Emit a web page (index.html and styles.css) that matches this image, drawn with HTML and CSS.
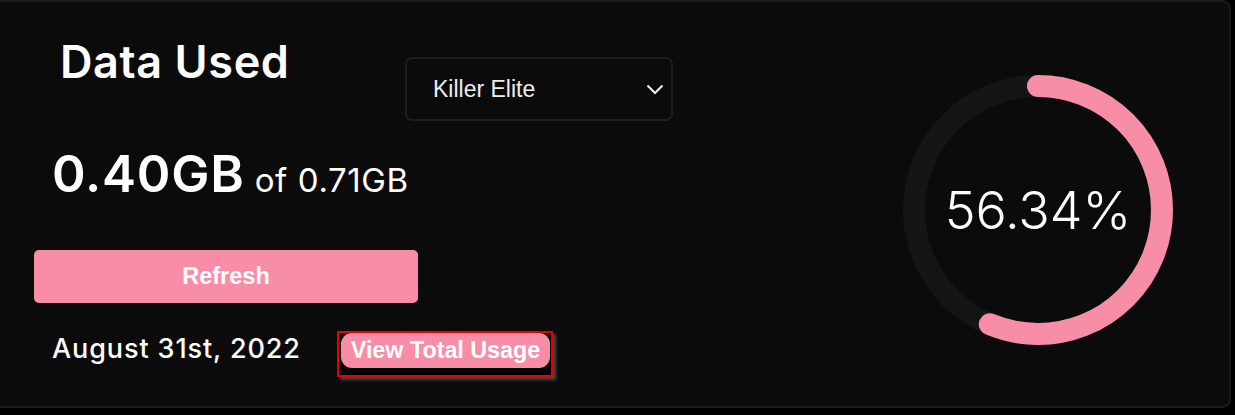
FILE: index.html
```html
<!DOCTYPE html>
<html lang="en">
<head>
<meta charset="utf-8">
<title>Data Used</title>
<link rel="stylesheet" href="styles.css">
</head>
<body>
<div class="card">
  <div class="left">
    <div class="title-row">
      <h1 class="title">Data Used</h1>
      <div class="select">
        <span class="select-label">Killer Elite</span>
        <svg class="chev" width="18" height="11" viewBox="0 0 18 11"><path d="M1.5 1.5 L9 9 L16.5 1.5" fill="none" stroke="#f2f2f2" stroke-width="2"/></svg>
      </div>
    </div>
    <div class="amount"><span class="used">0.40GB</span><span class="total">of 0.71GB</span></div>
    <button class="refresh">Refresh</button>
    <div class="date-row">
      <span class="date">August 31st, 2022</span>
      <button class="view"><span class="view-pill">View Total Usage</span></button>
    </div>
  </div>
  <div class="gauge">
    <svg class="ring" width="270" height="270" viewBox="0 0 270 270">
      <circle cx="135" cy="135" r="124" fill="none" stroke="#151515" stroke-width="22"/>
      <circle cx="135" cy="135" r="124" fill="none" stroke="#f78da7" stroke-width="22" stroke-linecap="round" stroke-dasharray="438.96 779.1" transform="rotate(-90 135 135)"/>
    </svg>
    <span class="pct">56.34%</span>
  </div>
</div>
</body>
</html>
```
FILE: styles.css
```css
html, body {
  margin: 0;
  padding: 0;
  background: #000;
}
body {
  width: 1235px;
  height: 415px;
  overflow: hidden;
}
.card {
  box-sizing: border-box;
  margin: 0 4px 0 -8px;
  height: 408px;
  background: #0b0b0b;
  border: 2px solid #1b1b1b;
  border-radius: 9px;
  display: flex;
  justify-content: space-between;
  align-items: flex-start;
}
.left {
  margin-left: 40px;
  display: flex;
  flex-direction: column;
}
.title-row {
  display: flex;
  align-items: flex-start;
}
.title {
  box-sizing: border-box;
  width: 371px;
  margin: 0;
  padding: 33px 0 0 26px;
  font-family: Inter, "Noto Sans", sans-serif;
  font-weight: 600;
  font-size: 45px;
  line-height: 54px;
  color: #fff;
  letter-spacing: 0.6px;
}
.select {
  box-sizing: border-box;
  margin-top: 55px;
  width: 268px;
  height: 64px;
  border: 2px solid #1e1e1e;
  border-radius: 7px;
  display: flex;
  align-items: center;
  justify-content: space-between;
  padding: 0 7px 0 26px;
}
.select-label {
  font-family: "Liberation Sans", Arial, sans-serif;
  font-size: 23px;
  color: #eeeeee;
}
.chev {
  margin-top: 0;
}
.amount {
  margin-top: 23px;
  padding-left: 18px;
  display: flex;
  align-items: baseline;
  gap: 10px;
  color: #fff;
  font-family: Inter, "Noto Sans", sans-serif;
  line-height: 60px;
}
.used {
  font-size: 51px;
  font-weight: 600;
  letter-spacing: 0.8px;
}
.total {
  font-size: 33px;
  font-weight: 400;
  letter-spacing: 0.6px;
}
.refresh {
  margin-top: 40px;
  width: 384px;
  height: 53px;
  border: none;
  border-radius: 5px;
  background: #f78da7;
  color: #fff;
  font-family: "Liberation Sans", Arial, sans-serif;
  font-weight: 700;
  font-size: 23.5px;
  padding: 0;
}
.date-row {
  margin-top: 28px;
  display: flex;
  align-items: flex-start;
}
.date {
  box-sizing: border-box;
  width: 303px;
  padding: 1px 0 0 18px;
  font-family: Inter, "Noto Sans", sans-serif;
  font-weight: 500;
  font-size: 27px;
  letter-spacing: 0.9px;
  color: #fff;
}
.view {
  box-sizing: border-box;
  border: 2px solid #e60000;
  background: #000;
  padding: 0 1px 7px 2px;
  margin: 0;
  box-shadow: 3px 3px 3px #4a4a4a;
  height: 46px;
  width: 216px;
  display: flex;
  align-items: flex-start;
}
.view-pill {
  display: block;
  width: 209px;
  height: 35px;
  line-height: 35px;
  background: #f78da7;
  border-radius: 11px;
  color: #fff;
  font-family: "Liberation Sans", Arial, sans-serif;
  font-weight: 700;
  font-size: 23.3px;
  text-align: center;
}
.gauge {
  margin: 73px 56px 0 0;
  display: grid;
  place-items: center;
}
.gauge > * {
  grid-area: 1 / 1;
}
.ring {
  display: block;
}
.pct {
  font-family: Inter, "Noto Sans", sans-serif;
  font-weight: 300;
  font-size: 52px;
  color: #fff;
  letter-spacing: 0px;
}
```
